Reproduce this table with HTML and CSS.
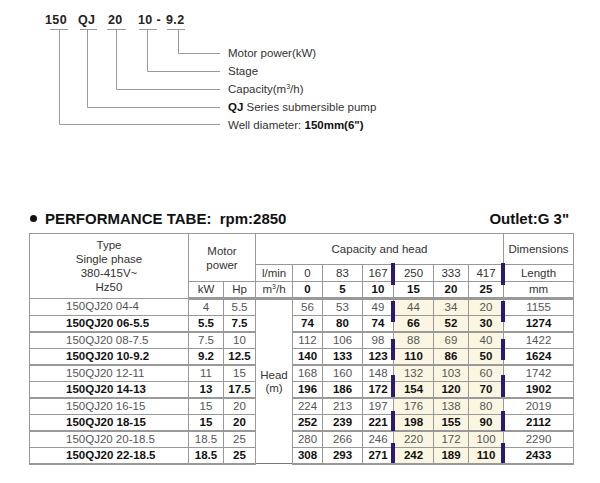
FILE: index.html
```html
<!DOCTYPE html>
<html lang="en">
  <head>
    <meta charset="UTF-8" />
    <meta name="viewport" content="width=device-width,initial-scale=1.0" />
    <title>150QJ20 Performance</title>
    <link rel="stylesheet" href="styles.css">
  </head>
  <body>
    <div class="model">
      <div class="codes">
        <span class="code code-dia">150</span>
        <span class="code code-series">QJ</span>
        <span class="code code-cap">20</span>
        <span class="code code-stage">10 -</span>
        <span class="code">9.2</span>
      </div>
      <ul class="legend">
        <li>Motor power(kW)</li>
        <li>Stage</li>
        <li>Capacity(m<sup>3</sup>/h)</li>
        <li><b>QJ</b> Series submersible pump</li>
        <li>Well diameter: <b>150mm(6")</b></li>
      </ul>
      <svg class="leaders" width="240" height="130" viewBox="0 0 240 130">
        <g fill="none" stroke="#9a9a9a" stroke-width="1">
          <path d="M50 29.5H68M59.5 29.5V124.5H220" />
          <path d="M80 29.5H97M87.5 29.5V107.5H220" />
          <path d="M107 29.5H126M116.5 29.5V89.5H220" />
          <path d="M139 29.5H157M147.5 29.5V71.5H220" />
          <path d="M167 29.5H185M178.5 29.5V53.5H220" />
        </g>
      </svg>
    </div>

    <div class="perf-head">
      <h2><span class="dot"></span>PERFORMANCE TABE:&nbsp; rpm:2850</h2>
      <span class="outlet">Outlet:G 3"</span>
    </div>

    <div class="table-wrap">
      <table class="perf">
        <colgroup>
          <col class="c-type" /><col class="c-kw" /><col class="c-hp" /><col class="c-unit" />
          <col class="c-0" /><col class="c-83" /><col class="c-167" />
          <col class="c-250 hl" /><col class="c-333 hl" /><col class="c-417 hl" />
          <col class="c-len" />
        </colgroup>
        <thead>
          <tr class="h1">
            <th rowspan="3">Type<br />Single phase<br />380-415V~<br />Hz50</th>
            <th colspan="2" rowspan="2" class="motor">Motor<br />power</th>
            <th colspan="7">Capacity and head</th>
            <th>Dimensions</th>
          </tr>
          <tr class="h2">
            <td>l/min</td><td>0</td><td>83</td><td>167</td><td>250</td><td>333</td><td>417</td><td>Length</td>
          </tr>
          <tr class="h3">
            <td>kW</td><td>Hp</td><td>m<sup>3</sup>/h</td>
            <td><b>0</b></td><td><b>5</b></td><td><b>10</b></td><td><b>15</b></td><td><b>20</b></td><td><b>25</b></td>
            <td>mm</td>
          </tr>
        </thead>
        <tbody>
          <tr>
            <td class="model-name">150QJ20 04-4</td><td>4</td><td>5.5</td>
            <td rowspan="10" class="head">Head<br />(m)</td>
            <td>56</td><td>53</td><td>49</td><td>44</td><td>34</td><td>20</td><td>1155</td>
          </tr>
          <tr class="b">
            <td class="model-name">150QJ20 06-5.5</td><td>5.5</td><td>7.5</td>
            <td>74</td><td>80</td><td>74</td><td>66</td><td>52</td><td>30</td><td>1274</td>
          </tr>
          <tr>
            <td class="model-name">150QJ20 08-7.5</td><td>7.5</td><td>10</td>
            <td>112</td><td>106</td><td>98</td><td>88</td><td>69</td><td>40</td><td>1422</td>
          </tr>
          <tr class="b">
            <td class="model-name">150QJ20 10-9.2</td><td>9.2</td><td>12.5</td>
            <td>140</td><td>133</td><td>123</td><td>110</td><td>86</td><td>50</td><td>1624</td>
          </tr>
          <tr>
            <td class="model-name">150QJ20 12-11</td><td>11</td><td>15</td>
            <td>168</td><td>160</td><td>148</td><td>132</td><td>103</td><td>60</td><td>1742</td>
          </tr>
          <tr class="b">
            <td class="model-name">150QJ20 14-13</td><td>13</td><td>17.5</td>
            <td>196</td><td>186</td><td>172</td><td>154</td><td>120</td><td>70</td><td>1902</td>
          </tr>
          <tr>
            <td class="model-name">150QJ20 16-15</td><td>15</td><td>20</td>
            <td>224</td><td>213</td><td>197</td><td>176</td><td>138</td><td>80</td><td>2019</td>
          </tr>
          <tr class="b">
            <td class="model-name">150QJ20 18-15</td><td>15</td><td>20</td>
            <td>252</td><td>239</td><td>221</td><td>198</td><td>155</td><td>90</td><td>2112</td>
          </tr>
          <tr>
            <td class="model-name">150QJ20 20-18.5</td><td>18.5</td><td>25</td>
            <td>280</td><td>266</td><td>246</td><td>220</td><td>172</td><td>100</td><td>2290</td>
          </tr>
          <tr class="b">
            <td class="model-name">150QJ20 22-18.5</td><td>18.5</td><td>25</td>
            <td>308</td><td>293</td><td>271</td><td>242</td><td>189</td><td>110</td><td>2433</td>
          </tr>
        </tbody>
      </table>
      <span class="bar bar-l bar-1"></span><span class="bar bar-r bar-1"></span>
      <span class="bar bar-l bar-2"></span><span class="bar bar-r bar-2"></span>
      <span class="bar bar-l bar-3"></span><span class="bar bar-r bar-3"></span>
      <span class="bar bar-l bar-4"></span><span class="bar bar-r bar-4"></span>
      <span class="bar bar-l bar-5"></span><span class="bar bar-r bar-5"></span>
      <span class="bar bar-l bar-6"></span><span class="bar bar-r bar-6"></span>
    </div>
  </body>
</html>
```

FILE: styles.css
```css
body {
  margin: 0;
  font-family: "Liberation Sans", Arial, sans-serif;
  color: #333;
  background: #fff;
}
.model {
  position: relative;
}
.codes {
  display: flex;
  padding: 12px 0 0 45px;
  height: 16px;
  font-size: 12.5px;
  font-weight: bold;
  line-height: 16px;
  color: #222;
  letter-spacing: 0.4px;
}
.code-dia {
  width: 33px;
}
.code-series {
  width: 30px;
}
.code-cap {
  width: 30px;
}
.code-stage {
  width: 28px;
}
.legend {
  list-style: none;
  margin: 16px 0 0 228px;
  padding: 0;
  font-size: 11.5px;
  line-height: 18px;
  color: #333;
}
.legend b {
  color: #111;
}
sup {
  font-size: 7px;
  line-height: 0;
  vertical-align: 4px;
}
.leaders {
  position: absolute;
  top: 0;
  left: 0;
}
.perf-head {
  display: flex;
  justify-content: space-between;
  align-items: center;
  height: 20px;
  margin: 74px 30px 5px;
  font-size: 15px;
  font-weight: bold;
  color: #111;
}
.perf-head h2 {
  display: flex;
  align-items: center;
  margin: 0;
  font-size: 15px;
}
.dot {
  width: 7px;
  height: 7px;
  margin-right: 8px;
  border-radius: 50%;
  background: #111;
}
.outlet {
  margin-right: 1px;
}
.table-wrap {
  position: relative;
  width: 544px;
  margin-left: 29px;
}
.perf {
  width: 544px;
  border-collapse: collapse;
  table-layout: fixed;
  font-size: 11.5px;
  border: 1px solid #777;
}
.c-type { width: 159px; }
.c-kw { width: 35px; }
.c-hp { width: 32px; }
.c-unit { width: 37px; }
.c-0 { width: 30px; }
.c-83 { width: 40px; }
.c-167 { width: 31px; }
.c-250 { width: 40px; }
.c-333 { width: 35px; }
.c-417 { width: 35px; }
.c-len { width: 70px; }
.hl {
  background: #fbf6e2;
}
.perf th,
.perf td {
  padding: 0;
  border: 1px solid #999;
  text-align: center;
  vertical-align: middle;
  line-height: 13px;
}
.perf th {
  font-weight: normal;
  color: #333;
  line-height: 14px;
}
.perf thead th,
.perf thead td {
  background: #fff;
  color: #333;
}
.perf thead b {
  color: #111;
}
.perf thead tr:last-child td {
  border-bottom: 3px solid #999;
}
.h1 {
  height: 31px;
}
.h2,
.h3 {
  height: 17px;
}
.perf tbody tr {
  height: 16.5px;
  color: #555;
}
.perf tbody tr:nth-child(even) td {
  border-bottom: 2px solid #999;
}
.perf tbody tr.b {
  font-weight: bold;
  color: #111;
}
.perf .model-name {
  text-align: left;
  padding-left: 36px;
}
.perf .head {
  background: #fff;
  color: #333;
  font-weight: normal;
  border-bottom: 1px solid #777;
}
.bar {
  position: absolute;
  width: 4px;
  background: #2b1a72;
}
.bar-l {
  left: 362px;
}
.bar-r {
  left: 472px;
}
.bar-1 { top: 30px; height: 22px; }
.bar-2 { top: 68px; height: 21px; }
.bar-3 { top: 106px; height: 21px; }
.bar-4 { top: 142px; height: 22px; }
.bar-5 { top: 178px; height: 20px; }
.bar-6 { top: 210px; height: 20px; }
```
